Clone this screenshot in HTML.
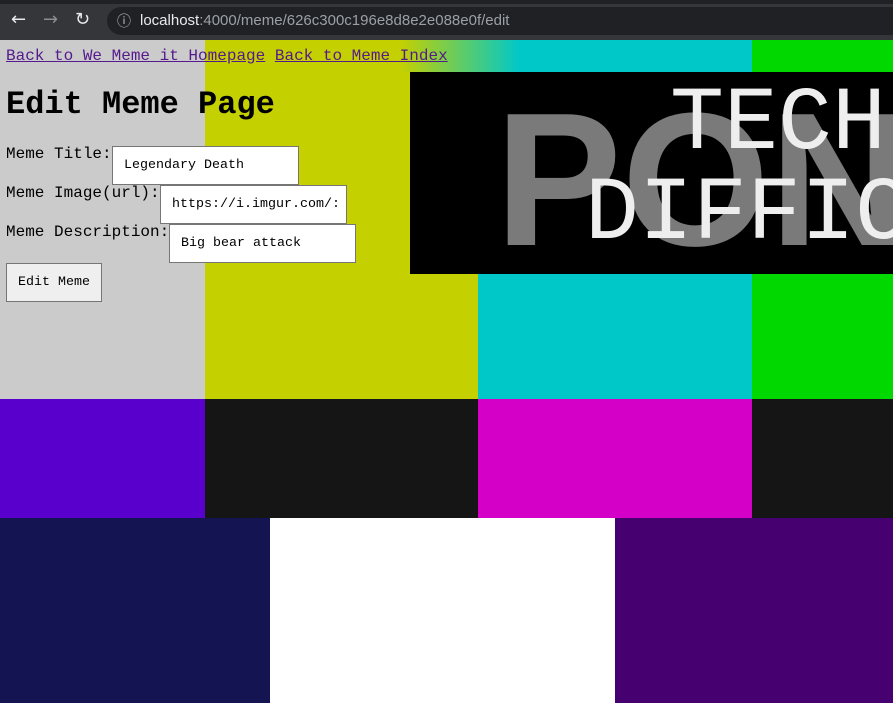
<!DOCTYPE html>
<html><head><meta charset="utf-8"><style>
*{margin:0;padding:0;box-sizing:border-box}
body{width:893px;height:703px;overflow:hidden;position:relative;background:#cbcbcb;font-family:"Liberation Mono",monospace}
.r{position:absolute}
.chrome{left:0;top:0;width:893px;height:40px;background:#35363a}
.tabs{left:0;top:0;width:893px;height:4px;background:#202124}
.url{left:107px;top:7px;width:800px;height:28px;border-radius:14px;background:#202124;color:#9aa0a6;font-family:"Liberation Sans",sans-serif;font-size:15px;line-height:28px;padding-left:33px}
.url b{color:#e8eaed;font-weight:normal}
.ic{color:#e8eaed;font-family:"DejaVu Sans",sans-serif;font-size:18px;top:9px}
a{color:#551a8b;font-size:16px;text-decoration:underline}
.lbl{font-size:16px;color:#000;left:6px}
.inp{background:#fff;border:1px solid #767676;height:39px;width:187px;font-size:13.33px;line-height:37px;padding-left:11px;white-space:nowrap;overflow:hidden;color:#000}
</style></head><body>
<div class="r chrome"></div><div class="r tabs"></div>
<div class="r ic" style="left:11px">&#8592;</div>
<div class="r ic" style="left:43px;color:#8a8d91">&#8594;</div>
<div class="r ic" style="left:75px">&#8635;</div>
<div class="r url"><span style="position:absolute;left:10px;top:0;color:#c4c7c5;font-size:14px">&#9432;</span><b>localhost</b>:4000/meme/626c300c196e8d8e2e088e0f/edit</div>

<div class="r" style="left:0;top:40px;width:205px;height:359px;background:#cbcbcb"></div>
<div class="r" style="left:205px;top:40px;width:273px;height:359px;background:#c4d000"></div>
<div class="r" style="left:478px;top:40px;width:274px;height:359px;background:#00c8c8"></div>
<div class="r" style="left:752px;top:40px;width:141px;height:359px;background:#00d800"></div>
<div class="r" style="left:400px;top:40px;width:120px;height:32px;background:linear-gradient(90deg,#c4d000,#00c8c8)"></div>
<div class="r" style="left:410px;top:72px;width:483px;height:202px;background:#000;overflow:hidden">
<div class="r" style="left:85px;top:28px;font-family:'Liberation Sans',sans-serif;font-weight:bold;font-size:190px;line-height:160px;color:#7a7a7a;white-space:nowrap">PON</div>
<div class="r" style="left:260px;top:8px;font-family:'Liberation Mono',monospace;font-size:90px;line-height:90px;color:#eee;white-space:nowrap">TECHN</div>
<div class="r" style="left:175px;top:98px;font-family:'Liberation Mono',monospace;font-size:90px;line-height:90px;color:#eee;white-space:nowrap">DIFFIC</div>
</div>
<div class="r" style="left:0;top:399px;width:205px;height:119px;background:#5a00cc"></div>
<div class="r" style="left:205px;top:399px;width:273px;height:119px;background:#151515"></div>
<div class="r" style="left:478px;top:399px;width:274px;height:119px;background:#d400c8"></div>
<div class="r" style="left:752px;top:399px;width:141px;height:119px;background:#151515"></div>
<div class="r" style="left:0;top:518px;width:270px;height:185px;background:#151452"></div>
<div class="r" style="left:270px;top:518px;width:345px;height:185px;background:#fff"></div>
<div class="r" style="left:615px;top:518px;width:278px;height:185px;background:#470070"></div>

<div class="r" style="left:6px;top:46px;line-height:20px"><a>Back to We Meme it Homepage</a> <a>Back to Meme Index</a></div>
<div class="r" style="left:6px;top:87px;font-size:32px;font-weight:bold;line-height:36px">Edit Meme Page</div>
<div class="r lbl" style="top:145px">Meme Title:</div>
<div class="r inp" style="left:112px;top:146px">Legendary Death</div>
<div class="r lbl" style="top:184px">Meme Image(url):</div>
<div class="r inp" style="left:160px;top:185px">https://i.imgur.com/:</div>
<div class="r lbl" style="top:223px">Meme Description:</div>
<div class="r inp" style="left:169px;top:224px">Big bear attack</div>
<div class="r" style="left:6px;top:263px;width:96px;height:39px;background:#efefef;border:1px solid #767676;font-size:13.33px;line-height:37px;text-align:center">Edit Meme</div>
</body></html>
